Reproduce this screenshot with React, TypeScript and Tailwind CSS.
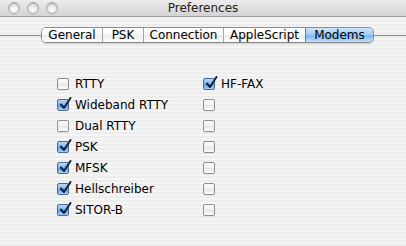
import React from "react";

const font = "font-['Lucida_Grande','DejaVu_Sans',sans-serif]";

const tabs = ["General", "PSK", "Connection", "AppleScript", "Modems"];
const tabWidths = ["w-[60px]", "w-[41px]", "w-[80px]", "w-[82px]", "w-[68px]"];

const left = [
  { label: "RTTY", on: false },
  { label: "Wideband RTTY", on: true },
  { label: "Dual RTTY", on: false },
  { label: "PSK", on: true },
  { label: "MFSK", on: true },
  { label: "Hellschreiber", on: true },
  { label: "SITOR-B", on: true },
];

const right = [
  { label: "HF-FAX", on: true },
  { label: "", on: false },
  { label: "", on: false },
  { label: "", on: false },
  { label: "", on: false },
  { label: "", on: false },
  { label: "", on: false },
];

function Light() {
  return (
    <div className="w-[12px] h-[12px] rounded-full border border-[#a8a8a8] bg-[radial-gradient(circle_at_50%_70%,#ffffff_0%,#e4e4e4_55%,#c4c4c4_100%)] shadow-[inset_0_1px_1px_rgba(0,0,0,0.15)]" />
  );
}

function Box({ on }: { on: boolean }) {
  if (on) {
    return (
      <div className="relative w-[12px] h-[12px] shrink-0 rounded-[2px] border border-[#4a6a95] bg-[linear-gradient(#bcd9f6_0%,#7eb4ec_50%,#5d9ce4_55%,#a9d3fa_100%)]">
        <svg className="absolute left-[1px] top-[-3px]" width="13" height="13" viewBox="0 0 13 13">
          <path d="M2 7.5 L5 11 L11.5 1" fill="none" stroke="#10223c" strokeWidth="2" strokeLinecap="round" strokeLinejoin="round" />
        </svg>
      </div>
    );
  }
  return (
    <div className="w-[12px] h-[12px] shrink-0 rounded-[2px] border border-[#8e8e8e] bg-[linear-gradient(#fafafa_0%,#f2f2f2_50%,#e6e6e6_55%,#ffffff_100%)] shadow-[0_1px_0_rgba(0,0,0,0.06)]" />
  );
}

function Row({ label, on }: { label: string; on: boolean }) {
  return (
    <div className="h-[21px] flex items-center gap-[6px] whitespace-nowrap">
      <Box on={on} />
      {label && <span className="text-[12px] text-black leading-none">{label}</span>}
    </div>
  );
}

export default function App() {
  return (
    <div
      className={`w-[406px] h-[246px] overflow-hidden flex flex-col ${font} bg-[repeating-linear-gradient(#ededed_0px,#ededed_2px,#f5f5f5_2px,#f5f5f5_4px)]`}
    >
      <div className="h-[17px] shrink-0 relative flex items-center justify-center bg-[linear-gradient(#ececec,#d3d3d3)] border-b border-[#9e9e9e]">
        <div className="absolute left-[8px] top-[2px] flex gap-[7px]">
          <Light />
          <Light />
          <Light />
        </div>
        <span className="text-[12px] text-[#222] leading-none">Preferences</span>
      </div>

      <div className="mt-[10px] h-[16px] flex items-center">
        <div className="w-[41px] h-px bg-[#8c8c8c]" />
        <div className="flex h-[16px] rounded-[5px] border border-[#8a8a8a] overflow-hidden shadow-[0_1px_1px_rgba(0,0,0,0.15)]">
          {tabs.map((t, i) => {
            const sel = t === "Modems";
            return (
              <div
                key={t}
                className={`${tabWidths[i]} flex items-center justify-center text-[12px] leading-none ${
                  i > 0 ? "border-l border-[#a4a4a4]" : ""
                } ${
                  sel
                    ? "bg-[linear-gradient(#cfe6fb_0%,#9ccaf4_50%,#7cb6ee_55%,#bfe1fd_100%)] border-l-[#5a7fae]"
                    : "bg-[linear-gradient(#ffffff_0%,#f7f7f7_50%,#ececec_55%,#fdfdfd_100%)]"
                }`}
              >
                {t}
              </div>
            );
          })}
        </div>
        <div className="flex-1 h-px bg-[#8c8c8c]" />
      </div>

      <div className="mt-[30px] ml-[57px] flex">
        <div className="w-[146px] flex flex-col">
          {left.map((r) => (
            <Row key={r.label} {...r} />
          ))}
        </div>
        <div className="flex flex-col">
          {right.map((r, i) => (
            <Row key={i} {...r} />
          ))}
        </div>
      </div>
    </div>
  );
}
